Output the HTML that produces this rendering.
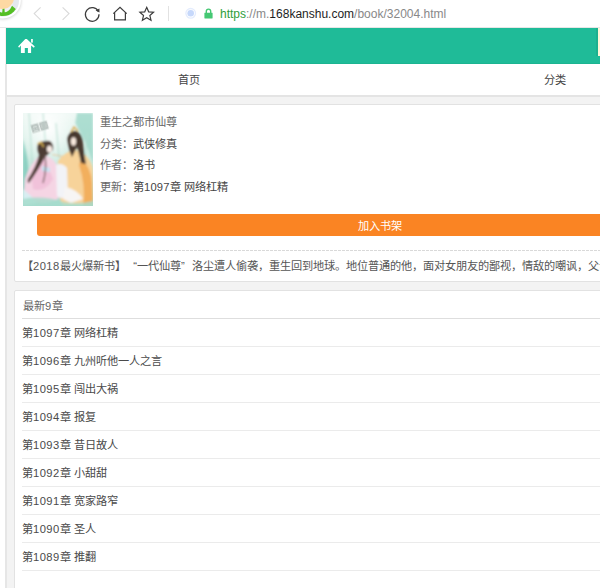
<!DOCTYPE html>
<html lang="zh-CN"><head><meta charset="utf-8">
<style>
*{margin:0;padding:0;box-sizing:border-box}
html,body{width:600px;height:588px;overflow:hidden;background:#fff;font-family:"Liberation Sans",sans-serif;}
.abs{position:absolute}
#tb{position:absolute;left:0;top:0;width:600px;height:28px;background:#fff}
#page{position:absolute;left:0;top:28px;width:600px;height:560px;background:#fff}
#lline{position:absolute;left:5px;top:64px;width:2px;height:524px;background:#e6e6e6}
#hdr{position:absolute;left:6px;top:28px;width:594px;height:36px;background:#1fbb98;border-bottom:1px solid #1cb491}
#nav{position:absolute;left:7px;top:64px;width:593px;height:33px;background:#fff;border-bottom:2px solid #e4e4e4}
#bg{position:absolute;left:7px;top:97px;width:593px;height:491px;background:#f3f3f3}
.card{position:absolute;left:14px;width:700px;background:#fff;border:1px solid #e2e2e2;border-radius:2px}
.d{letter-spacing:.45px}
.t{position:absolute;white-space:nowrap;font-size:11.2px;line-height:14px}
</style></head><body>
<div id="tb"></div>
<div id="page"></div>
<div class="abs" style="left:0;top:27px;width:600px;height:1px;background:#e6e6e6"></div>


<!-- avatar -->
<svg class="abs" style="left:0;top:0" width="30" height="30" viewBox="0 0 30 30">
 <defs><filter id="sh" x="-50%" y="-50%" width="200%" height="200%"><feGaussianBlur stdDeviation="1.4"/></filter>
 <clipPath id="cg"><circle cx="3" cy="0.5" r="15.4"/></clipPath></defs>
 <circle cx="3" cy="1.2" r="18.2" fill="#000" opacity="0.16" filter="url(#sh)"/>
 <circle cx="3" cy="0.5" r="17.9" fill="#fff"/>
 <circle cx="3" cy="0.5" r="16" fill="#e4e8ed"/>
 <g clip-path="url(#cg)">
  <path d="M3 0.5 L11.2 5.1 L16.3 9.6 L20 30 L-10 30 L-10 0.5 Z" fill="#55bf24"/>
 </g>
 <ellipse cx="3" cy="0.5" rx="10.2" ry="12" fill="#eef0f3"/>
 <path d="M2.6 8 L4.4 8 L4.8 13 L2.2 13 Z" fill="#55bf24"/>
 <ellipse cx="2" cy="-2" rx="12" ry="11" fill="#fdd9a3"/>
</svg>
<!-- back / forward -->
<svg class="abs" style="left:30px;top:5px" width="44" height="18" viewBox="0 0 44 18">
 <path d="M10.6 2.3 L4.2 8.6 L10.6 14.9" fill="none" stroke="#d9d9d9" stroke-width="1.1"/>
 <path d="M32.6 2.3 L39 8.6 L32.6 14.9" fill="none" stroke="#d9d9d9" stroke-width="1.1"/>
</svg>
<!-- reload -->
<svg class="abs" style="left:82px;top:4px" width="20" height="20" viewBox="0 0 20 20">
 <path d="M16.3 7.4 A6.8 6.8 0 1 0 17 10.2" fill="none" stroke="#3c3c3c" stroke-width="1.25"/>
 <path d="M13.6 6.6 L17.4 4.4 L17.5 8.4 Z" fill="#3c3c3c"/>
</svg>
<!-- home -->
<svg class="abs" style="left:110px;top:4px" width="20" height="20" viewBox="0 0 20 20">
 <path d="M3.3 9.6 L10 3.3 L16.7 9.6 M4.6 8.4 L4.6 15.8 L15.4 15.8 L15.4 8.4" fill="none" stroke="#3c3c3c" stroke-width="1.2" stroke-linejoin="miter"/>
</svg>
<!-- star -->
<svg class="abs" style="left:137px;top:4px" width="20" height="20" viewBox="0 0 20 20">
 <g transform="translate(9.7 10) scale(0.9) translate(-9.7 -10)">
 <path d="M9.7 2.6 L11.9 7.6 L17.3 8.1 L13.2 11.6 L14.5 16.9 L9.7 14.1 L4.9 16.9 L6.2 11.6 L2.1 8.1 L7.5 7.6 Z" fill="none" stroke="#3c3c3c" stroke-width="1.3" stroke-linejoin="miter"/>
 </g>
</svg>
<div class="abs" style="left:168px;top:6px;width:1px;height:15px;background:#e2e2e2"></div>
<!-- site icon -->
<svg class="abs" style="left:184px;top:7px" width="14" height="14" viewBox="0 0 14 14">
 <circle cx="6.7" cy="6.3" r="4.8" fill="none" stroke="#e4ecfd" stroke-width="1.3"/>
 <circle cx="6.7" cy="6.3" r="3.3" fill="#c6d8fb"/>
</svg>
<!-- lock -->
<svg class="abs" style="left:203px;top:7px" width="11" height="13" viewBox="0 0 11 13">
 <path d="M3.3 6 V4.3 A2.2 2.2 0 0 1 7.7 4.3 V6" fill="none" stroke="#45c873" stroke-width="1.4"/>
 <rect x="1.4" y="5.7" width="8.2" height="5.8" rx="0.4" fill="#45c873"/>
</svg>
<div class="abs" id="url" style="left:220px;top:6px;font-size:12px;line-height:16px;white-space:nowrap;color:#888"><span style="color:#2f9e3a">https</span>://m.<span style="color:#1e1e1e">168kanshu.com</span>/book/32004.html</div>

<div id="hdr"></div>
<svg class="abs" style="left:14px;top:34px" width="26" height="24" viewBox="0 0 26 24">
 <path d="M4.1 12.5 L11.3 5 L12.8 5 L20.8 12.5 L19.8 13.8 L17.1 11.4 L17.1 19.1 L13.9 19.1 L13.9 13.9 L10.8 13.9 L10.8 19.1 L6.9 19.1 L6.9 11.6 L5.1 13.8 Z" fill="#fff"/>
 <rect x="17.1" y="5" width="1.7" height="3.6" fill="#fff"/>
</svg>
<div class="abs" style="left:596px;top:28px;width:2px;height:28px;background:#1cb08e"></div><div class="abs" style="left:598px;top:28px;width:2px;height:28px;background:#fff7d9"></div>
<div id="nav"></div>
<div id="bg"></div>
<div id="lline"></div>
<div class="abs" style="left:5px;top:28px;width:1px;height:36px;background:#fbeeee"></div>
<div class="card" style="top:104px;height:178px"></div>
<div class="card" style="top:290px;height:320px"></div>
<!-- nav text -->
<div class="t" style="left:178px;top:73px;color:#444">首页</div>
<div class="t" style="left:544px;top:73px;color:#444">分类</div>
<!-- cover -->
<svg class="abs" style="left:22.5px;top:112.5px" width="70" height="93" viewBox="0 0 70 93">
 <defs>
  <linearGradient id="bgc" x1="0" y1="0" x2="0" y2="1">
   <stop offset="0" stop-color="#eef8f4"/><stop offset="0.3" stop-color="#d9f0e8"/><stop offset="0.65" stop-color="#bfe5da"/><stop offset="1" stop-color="#a5dacd"/>
  </linearGradient>
  <radialGradient id="sky" cx="0.35" cy="0.15" r="0.45"><stop offset="0" stop-color="#ffffff"/><stop offset="1" stop-color="#ffffff" stop-opacity="0"/></radialGradient>
  <filter id="bl" x="-10%" y="-10%" width="120%" height="120%"><feGaussianBlur stdDeviation="0.8"/></filter>
  <filter id="bl2" x="-20%" y="-20%" width="140%" height="140%"><feGaussianBlur stdDeviation="0.45"/></filter>
  <clipPath id="cc"><rect width="70" height="93"/></clipPath>
 </defs>
 <g clip-path="url(#cc)">
 <rect width="70" height="93" fill="url(#bgc)"/>
 <g filter="url(#bl)">
 <path d="M0 26 Q8 50 5 93 L0 93 Z" fill="#7ecabb" opacity="0.8"/>
 <path d="M54 0 L70 0 L70 50 Q63 28 52 10Z" fill="#9ad6c7" opacity="0.75"/>
 <rect width="70" height="93" fill="url(#sky)"/>
 <path d="M6 0 L10 60 M20 0 L24 50 M33 10 L36 45 M64 20 L60 80" stroke="#b3ddd0" stroke-width="1" fill="none"/>
 <!-- girl robe -->
 <path d="M2 66 Q8 48 18 42 Q28 42 34 52 L38 82 Q32 91 18 90 Q4 88 1 78 Z" fill="#f5d5e4"/>
 <path d="M8 60 Q14 48 22 46 L30 66 Q22 80 10 76Z" fill="#efb5d3" opacity="0.6"/>
 <path d="M19 53 L27 55 L27 59 L19 58Z" fill="#c7e3f2"/>
 <path d="M0 76 Q8 82 14 90 L0 93Z" fill="#d8eef2"/>
 <!-- girl hair -->
 <path d="M15 31 Q20 27 27 28 Q31 31 30 37 L22 44 Q16 56 6 70 Q4 70 5 66 Q13 54 16 42 Q13 36 15 31Z" fill="#4d3d36"/>
 <path d="M22 42 Q24 56 20 70" stroke="#6a5550" stroke-width="1.2" fill="none"/>
 <ellipse cx="26.5" cy="36" rx="2.6" ry="3.6" fill="#f9ece6"/>
 <path d="M14.5 31 L18 29 L20.5 34" stroke="#d8b04e" stroke-width="1.6" fill="none"/>
 <!-- flute/hand -->
 <path d="M29 41.5 L41 43.5" stroke="#e3c79a" stroke-width="1.2" fill="none"/>
 <!-- man robe -->
 <path d="M35 48 Q42 38 52 37 Q66 40 70 56 L70 93 L40 93 Q33 80 35 64 Z" fill="#f7d39a"/>
 <path d="M58 46 Q68 54 69 70 L70 93 L60 93 Q63 72 56 52Z" fill="#f1a852" opacity="0.85"/>
 <path d="M33 52 Q39 49 44 55 L45 82 Q40 88 34 83 Z" fill="#f2f3f7"/>
 <path d="M42 74 Q54 76 60 86 L48 90 L40 86Z" fill="#f7f5f4"/>
 <!-- man hair -->
 <path d="M44 26 Q46 17 53 18 Q59 20 60 30 Q61 42 63 51 L58 50 Q56 40 54 34 L49 44 Q46 38 45 32Z" fill="#46372f"/>
 <ellipse cx="50.5" cy="28.5" rx="2.6" ry="4.2" fill="#f8e9de"/>
 <path d="M48 19 L51 14 L55 18" stroke="#d9ac48" stroke-width="1.6" fill="none"/>
 <!-- water bottom -->
 <path d="M0 86 Q20 82 40 89 Q55 92 70 88 L70 93 L0 93Z" fill="#a6dccd" opacity="0.85"/>
 </g>
 <!-- stamp -->
 <g transform="rotate(-16 16.5 13.5)" opacity="0.7" filter="url(#bl2)">
  <rect x="8" y="9.5" width="8" height="9" fill="#c2ccc8"/>
  <rect x="16.6" y="9.5" width="8.6" height="9" fill="#c2ccc8"/>
  <path d="M9.2 11 V17 M9.2 11 H14.8 V17 M10.5 13 L13.5 16 M13.5 13 L10.5 16 M17.8 11 H24 V17 H17.8Z M19 13 H22.8 M19 15 H22.8" stroke="#8f9b97" stroke-width="0.9" fill="none"/>
 </g>
 </g>
</svg>
<div class="t" style="left:100px;top:114.5px;color:#666">重生之都市仙尊</div>
<div class="t" style="left:100px;top:136.5px;color:#666">分类：<span style="color:#444">武侠修真</span></div>
<div class="t" style="left:100px;top:157.5px;color:#666">作者：<span style="color:#444">洛书</span></div>
<div class="t" style="left:100px;top:179.5px;color:#666">更新：<span style="color:#444">第<span style="letter-spacing:.2px">1097</span>章 网络杠精</span></div>
<div class="abs" style="left:37px;top:214px;width:686px;height:22px;background:#fa8423;border-radius:3px"></div>
<div class="t" style="left:358px;top:219px;color:#fff">加入书架</div>
<div class="abs" style="left:22px;top:250px;width:700px;height:1px;background:repeating-linear-gradient(90deg,#d9d9d9 0,#d9d9d9 2.7px,transparent 2.7px,transparent 4px)"></div>
<div class="t" style="left:22px;top:259px;color:#555">【<span class="d">2018</span>最火爆新书】<span style="display:inline-block;width:11.2px;text-align:right">“</span>一代仙尊<span style="display:inline-block;width:11.2px;text-align:left">”</span>洛尘遭人偷袭，重生回到地球。<span style="letter-spacing:-4px"> </span>地位普通的他，面对女朋友的鄙视，情敌的嘲讽，父母</div>
<div class="t" style="left:23px;top:298.5px;color:#666">最新<span class="d">9</span>章</div>
<div class="abs" style="left:22px;top:318px;width:700px;height:1px;background:#dedede"></div>
<div class="t" style="left:22px;top:326px;color:#4a4a4a">第<span class="d">1097</span>章 网络杠精</div>
<div class="abs" style="left:22px;top:346px;width:700px;height:1px;background:#ebebeb"></div>
<div class="t" style="left:22px;top:354px;color:#4a4a4a">第<span class="d">1096</span>章 九州听他一人之言</div>
<div class="abs" style="left:22px;top:374px;width:700px;height:1px;background:#ebebeb"></div>
<div class="t" style="left:22px;top:382px;color:#4a4a4a">第<span class="d">1095</span>章 闯出大祸</div>
<div class="abs" style="left:22px;top:402px;width:700px;height:1px;background:#ebebeb"></div>
<div class="t" style="left:22px;top:410px;color:#4a4a4a">第<span class="d">1094</span>章 报复</div>
<div class="abs" style="left:22px;top:430px;width:700px;height:1px;background:#ebebeb"></div>
<div class="t" style="left:22px;top:438px;color:#4a4a4a">第<span class="d">1093</span>章 昔日故人</div>
<div class="abs" style="left:22px;top:458px;width:700px;height:1px;background:#ebebeb"></div>
<div class="t" style="left:22px;top:466px;color:#4a4a4a">第<span class="d">1092</span>章 小甜甜</div>
<div class="abs" style="left:22px;top:486px;width:700px;height:1px;background:#ebebeb"></div>
<div class="t" style="left:22px;top:494px;color:#4a4a4a">第<span class="d">1091</span>章 宽家路窄</div>
<div class="abs" style="left:22px;top:514px;width:700px;height:1px;background:#ebebeb"></div>
<div class="t" style="left:22px;top:522px;color:#4a4a4a">第<span class="d">1090</span>章 圣人</div>
<div class="abs" style="left:22px;top:542px;width:700px;height:1px;background:#ebebeb"></div>
<div class="t" style="left:22px;top:550px;color:#4a4a4a">第<span class="d">1089</span>章 推翻</div>
<div class="abs" style="left:22px;top:570px;width:700px;height:1px;background:#ebebeb"></div>
</body></html>
